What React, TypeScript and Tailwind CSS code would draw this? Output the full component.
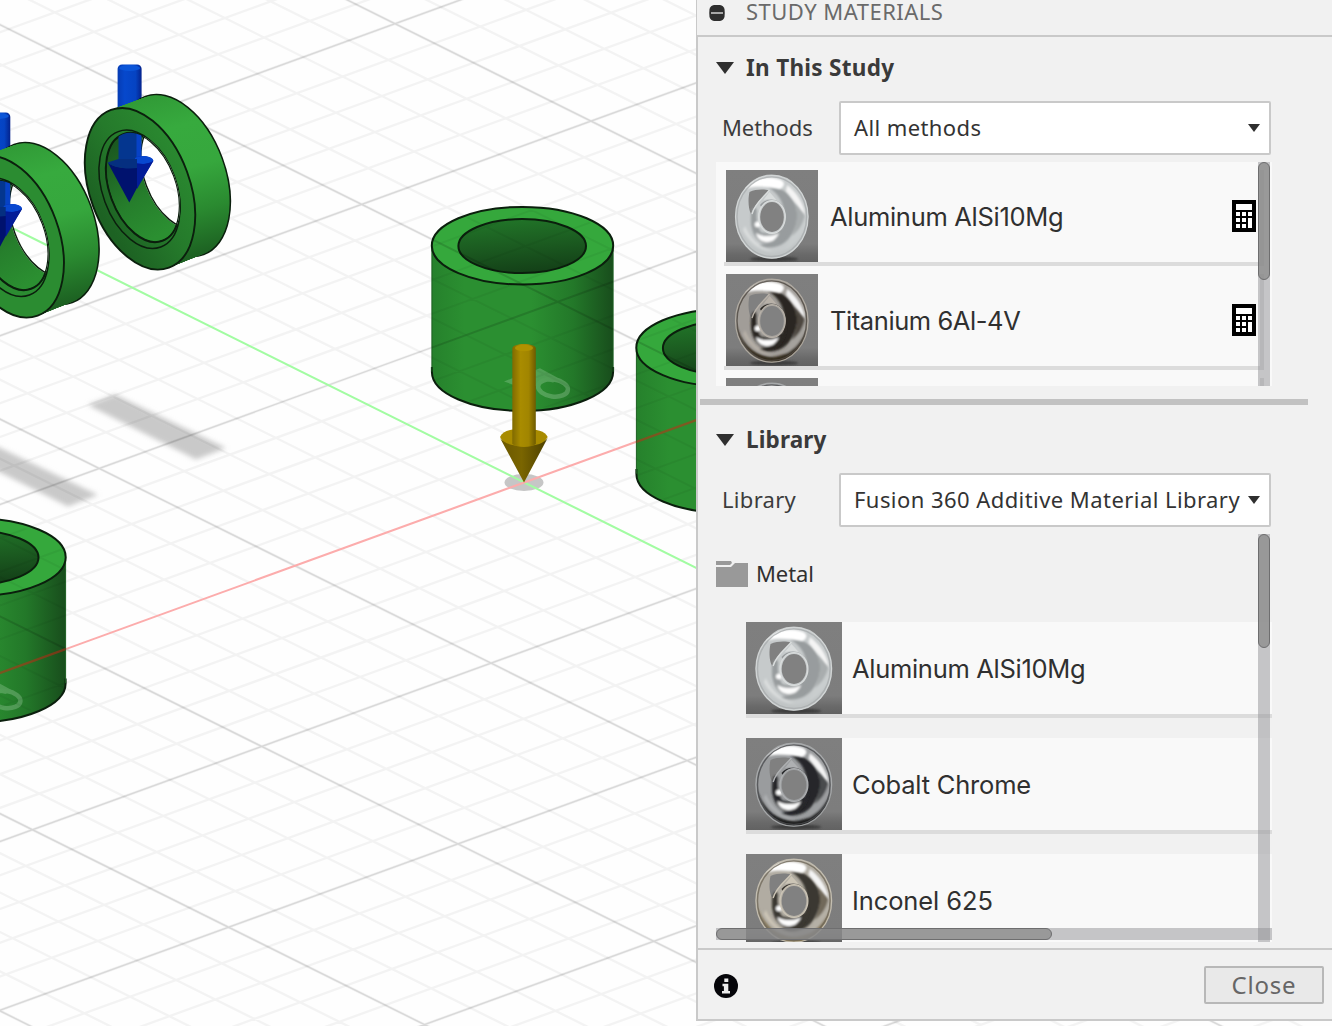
import React from "react";

/* ---------- Canvas geometry ---------- */

const ORIGIN = { x: 524.4, y: 482.5 };
const U = { x: 196, y: 97.4 };
const V = { x: -229.3, y: 83.3 };
const DIVISIONS = 5;

function gridPaths() {
  let minor = "";
  let major = "";
  const reach = 10;
  for (let i = -6 * DIVISIONS; i <= 6 * DIVISIONS; i++) {
    if (i === 0) continue;
    const k = i / DIVISIONS;
    const along = `M${(ORIGIN.x + k * V.x - reach * U.x).toFixed(1)} ${(ORIGIN.y + k * V.y - reach * U.y).toFixed(1)}L${(ORIGIN.x + k * V.x + reach * U.x).toFixed(1)} ${(ORIGIN.y + k * V.y + reach * U.y).toFixed(1)}`;
    const across = `M${(ORIGIN.x + k * U.x - reach * V.x).toFixed(1)} ${(ORIGIN.y + k * U.y - reach * V.y).toFixed(1)}L${(ORIGIN.x + k * U.x + reach * V.x).toFixed(1)} ${(ORIGIN.y + k * U.y + reach * V.y).toFixed(1)}`;
    if (i % DIVISIONS === 0) major += along + across;
    else minor += along + across;
  }
  return { minor, major };
}

const GRID = gridPaths();

/* Path of an ellipse whose major axis is tilted, in plain user coordinates. */
function tilted(cx: number, cy: number, rx: number, ry: number) {
  const a = (69.8 * Math.PI) / 180;
  const px = rx * Math.cos(a);
  const py = rx * Math.sin(a);
  return `M${cx - px} ${cy - py}A${rx} ${ry} 69.8 1 1 ${cx + px} ${cy + py}A${rx} ${ry} 69.8 1 1 ${cx - px} ${cy - py}Z`;
}

const FRONT = tilted(140, 188.8, 84, 50);
const BACK = tilted(174.5, 175.5, 83.5, 50);
const BORE = tilted(142.8, 187.5, 57, 33.5);
const THROUGH = tilted(177.5, 174, 57, 34);
const RING_STEPS = Array.from({ length: 30 }, (_, i) => i / 29);

function Ring({ id, dx, dy, face }: { id: string; dx: number; dy: number; face: string }) {
  return (
    <g transform={`translate(${dx} ${dy})`}>
      <clipPath id={`${id}-hole`}>
        <path d={BORE} />
      </clipPath>
      <clipPath id={`${id}-through`}>
        <path d={THROUGH} />
      </clipPath>
      <rect x="117.6" y="64.5" width="24" height="60" rx="4.5" fill="url(#blueShaft)" />
      <ellipse cx="129.6" cy="68" rx="10.5" ry="3" fill="#0b55d8" />
      <path d={BACK} fill="none" stroke="#0b1f0d" strokeWidth="3" />
      {RING_STEPS.map((t) => (
        <path key={t} d={tilted(174.5 - 34.5 * t, 175.5 + 13.3 * t, 83.5 + 0.5 * t, 50)} fill="url(#ringSide)" />
      ))}
      <path d={FRONT} fill={face} stroke="#0b1f0d" strokeWidth="1.9" />
      <path d={tilted(139.5, 189.3, 61.5, 36.8)} fill="none" stroke="#0b1f0d" strokeWidth="1.5" />
      <path d={BORE} fill="url(#ringInner)" stroke="#0b1f0d" strokeWidth="1.6" />
      <g clipPath={`url(#${id}-hole)`}>
        <g clipPath={`url(#${id}-through)`}>
          <rect x="80" y="80" width="160" height="200" fill="#fff" />
          <use href="#grid" transform={`translate(${-dx} ${-dy})`} />
          <path d={THROUGH} fill="none" stroke="#0b1f0d" strokeWidth="3" />
        </g>
        <path d={BORE} fill="none" stroke="#0b1f0d" strokeWidth="2.4" />
        <rect x="118.5" y="120" width="18.5" height="44" fill="#04368f" />
        <rect x="136.5" y="120" width="5" height="44" fill="#0742c6" />
      </g>
      <path d="M137 157 C143 155 153 157 153.3 161 L141 181 L129.3 190 Z" fill="#00159a" />
      <path d="M135 158 C140 154.5 153 155.5 153.3 161 C148 165 140 164 135 163 Z" fill="#0847cf" />
      <path d="M107.7 162.500 C112 167 124 168.500 129 167.500 L137 168 C139 172 139 178 138 186 L129.3 202.500 Z" fill="#00126e" />
      <path d="M137 164 C144 165 150 163 153.3 161 L137 189 Z" fill="#021c98" />
      <path d="M107.7 162.5 L118.5 159 L137 159 L137 168 C126 169.500 112 167.5 107.7 162.5 Z" fill="#052f80" />
    </g>
  );
}

function Tube({ dx, dy }: { dx: number; dy: number }) {
  return (
    <g transform={`translate(${dx} ${dy})`}>
      <path d="M431.9 245.7 V371.9 A90.6 39 0 0 0 613.1 371.9 V245.7 Z" fill="url(#tubeSide)" />
      <path d="M431.9 367 V371.9 A90.6 39 0 0 0 613.1 371.9 V367" fill="none" stroke="#0b1f0d" strokeWidth="2" />
      <path d="M431.9 245.7 V371.7 M613.1 245.7 V371.7" stroke="#1c5f22" strokeWidth="1" />
      <ellipse cx="522.5" cy="245.7" rx="90.7" ry="38.8" fill="#35a83c" stroke="#0b1f0d" strokeWidth="2" />
      <ellipse cx="522.2" cy="246.1" rx="63.8" ry="27" fill="url(#tubeHole)" stroke="#0b1f0d" strokeWidth="2" />
      <g opacity="0.22">
        <path d="M504 381.5 L514 377.5 L540 368.3 L560 379 L553 382.5 L543 380 L536 386 L520 387 Z" fill="#d8f0da" />
        <ellipse cx="553" cy="388" rx="15" ry="8.5" transform="rotate(8 553 388)" fill="none" stroke="#e8fbe9" strokeWidth="4.5" />
      </g>
    </g>
  );
}

function Scene() {
  return (
    <svg className="absolute inset-0" width="1332" height="1026" viewBox="0 0 1332 1026">
      <defs>
        <g id="grid" fill="none">
          <path d={GRID.minor} stroke="#000" strokeOpacity="0.042" strokeWidth="2.4" />
          <path d={GRID.major} stroke="#000" strokeOpacity="0.05" strokeWidth="2.8" />
          <path d={GRID.major} stroke="#000" strokeOpacity="0.1" strokeWidth="1.4" />
          <path d={`M${ORIGIN.x - 10 * U.x} ${ORIGIN.y - 10 * U.y}L${ORIGIN.x + 10 * U.x} ${ORIGIN.y + 10 * U.y}`} stroke="#a2fca2" strokeWidth="2.1" />
          <path d={`M${ORIGIN.x - 10 * V.x} ${ORIGIN.y - 10 * V.y}L${ORIGIN.x + 10 * V.x} ${ORIGIN.y + 10 * V.y}`} stroke="#fcacac" strokeWidth="2.1" />
        </g>
        <linearGradient id="tubeSide" x1="0" x2="1" y1="0" y2="0">
          <stop offset="0" stopColor="#26812c" />
          <stop offset="0.18" stopColor="#2b8f31" />
          <stop offset="0.55" stopColor="#2b8f31" />
          <stop offset="0.78" stopColor="#237829" />
          <stop offset="1" stopColor="#184d1c" />
        </linearGradient>
        <linearGradient id="tubeHole" x1="0.4" x2="0.6" y1="0" y2="1">
          <stop offset="0" stopColor="#217428" />
          <stop offset="0.5" stopColor="#1b5a20" />
          <stop offset="1" stopColor="#133f17" />
        </linearGradient>
        <linearGradient id="ringSide" gradientUnits="userSpaceOnUse" x1="160" y1="95" x2="205" y2="262">
          <stop offset="0" stopColor="#319b37" />
          <stop offset="0.2" stopColor="#37aa3e" />
          <stop offset="0.45" stopColor="#36a73d" />
          <stop offset="0.7" stopColor="#2a8a30" />
          <stop offset="1" stopColor="#1a591f" />
        </linearGradient>
        <linearGradient id="ringFace" gradientUnits="userSpaceOnUse" x1="95" y1="205" x2="180" y2="150">
          <stop offset="0" stopColor="#1d6223" />
          <stop offset="0.5" stopColor="#257a2b" />
          <stop offset="1" stopColor="#2a8930" />
        </linearGradient>
        <linearGradient id="ringInner" gradientUnits="userSpaceOnUse" x1="105" y1="150" x2="160" y2="235">
          <stop offset="0" stopColor="#1b5820" />
          <stop offset="0.6" stopColor="#267f2c" />
          <stop offset="1" stopColor="#2b8f31" />
        </linearGradient>
        <linearGradient id="blueShaft" x1="0" x2="1" y1="0" y2="0">
          <stop offset="0" stopColor="#063cb4" />
          <stop offset="0.3" stopColor="#0648cc" />
          <stop offset="0.75" stopColor="#0543c2" />
          <stop offset="1" stopColor="#04228c" />
        </linearGradient>
        <linearGradient id="goldShaft" x1="0" x2="1" y1="0" y2="0">
          <stop offset="0" stopColor="#806a00" />
          <stop offset="0.35" stopColor="#a98c00" />
          <stop offset="0.7" stopColor="#a18500" />
          <stop offset="1" stopColor="#6d5a00" />
        </linearGradient>
        <linearGradient id="goldCone" x1="0" x2="1" y1="0" y2="0">
          <stop offset="0" stopColor="#6a5700" />
          <stop offset="0.45" stopColor="#7a6500" />
          <stop offset="1" stopColor="#4c3f00" />
        </linearGradient>
        <filter id="soft" x="-20%" y="-20%" width="140%" height="140%">
          <feGaussianBlur stdDeviation="2.4" />
        </filter>
      </defs>

      <rect width="1332" height="1026" fill="#fefefe" />
      <g fill="#c9c9c9" filter="url(#soft)">
        <path d="M88 405 L115 394.5 L226 448 L196 459.5 Z" />
        <path d="M-40 452 L-13 441.5 L98 495 L68 506.5 Z" />
      </g>
      <ellipse cx="524" cy="482.5" rx="19.5" ry="8.5" fill="#c6c6c6" />
      <use href="#grid" />

      <Tube dx={0} dy={0} />
      <Tube dx={204.5} dy={102} />
      <Tube dx={-547.5} dy={311.5} />
      <g opacity="0.45">
        <clipPath id="tubes">
          <path d="M432 246 A90.7 39 0 0 1 613 246 V372 A90.7 39 0 0 1 432 372 Z" />
          <path d="M636.5 348 A90.7 39 0 0 1 817.5 348 V474 A90.7 39 0 0 1 636.5 474 Z" />
          <path d="M-115 557 A90.7 39 0 0 1 65.5 557 V683 A90.7 39 0 0 1 -115 683 Z" />
        </clipPath>
        <g clipPath="url(#tubes)" fill="none">
          <path d={GRID.minor} stroke="#000" strokeOpacity="0.1" strokeWidth="2" />
          <path d={GRID.major} stroke="#000" strokeOpacity="0.3" strokeWidth="2" />
          <path d={`M${ORIGIN.x - 10 * V.x} ${ORIGIN.y - 10 * V.y}L${ORIGIN.x + 10 * V.x} ${ORIGIN.y + 10 * V.y}`} stroke="#e01b10" strokeWidth="2.4" />
        </g>
      </g>

      <Ring id="ringB" dx={0} dy={0} face="url(#ringFace)" />
      <Ring id="ringA" dx={-131.3} dy={48} face="#2b8c31" />

      <path d="M500 437 C503 430 511 429 524 429 C537 429 545 431 547.7 437 L540 448 H507 Z" fill="#a88b00" />
      <path d="M500 438 C504 443 511 446 524 446 C537 446 544 443 547.7 438 L524 482.5 Z" fill="url(#goldCone)" />
      <path d="M512.3 348.500 C512.3 342.5 535.8 342.5 535.8 348.500 V444 C531 448 517 448 512.3 444 Z" fill="url(#goldShaft)" />
      <ellipse cx="524" cy="348" rx="9" ry="3.2" fill="#b09200" />
    </svg>
  );
}

/* ---------- Material thumbnails ---------- */

type Tone = { rim: string; body: string; dark: string; mid: string; foot: string; edge: string };

const ALUMINUM: Tone = { rim: "#a9adae", body: "#c6cacb", dark: "#989c9e", mid: "#c9cdce", foot: "#c0c4c5", edge: "#dadddd" };
const TITANIUM: Tone = { rim: "#4d4740", body: "#a19d98", dark: "#2b2824", mid: "#a5a29d", foot: "#33291c", edge: "#b8b1a8" };
const COBALT: Tone = { rim: "#4a4b4d", body: "#9a9c9e", dark: "#27282a", mid: "#9c9ea0", foot: "#1c1d1f", edge: "#aeb0b2" };
const INCONEL: Tone = { rim: "#71695a", body: "#b1aca2", dark: "#3b3731", mid: "#b5b0a6", foot: "#7e6f50", edge: "#ccc5b6" };

function Thumb({ id, tone, className }: { id: string; tone: Tone; className: string }) {
  return (
    <svg className={className} viewBox="0 0 92 92" preserveAspectRatio="none">
      <defs>
        <linearGradient id={`${id}-bg`} x1="0" x2="0" y1="0" y2="1">
          <stop offset="0" stopColor="#7f7f7f" />
          <stop offset="0.8" stopColor="#7d7d7d" />
          <stop offset="0.92" stopColor="#696969" />
          <stop offset="1" stopColor="#626262" />
        </linearGradient>
        <filter id={`${id}-b`} x="-30%" y="-30%" width="160%" height="160%">
          <feGaussianBlur stdDeviation="0.8" />
        </filter>
        <clipPath id={`${id}-c`}>
          <ellipse cx="45.8" cy="46.7" rx="36.5" ry="41.7" />
        </clipPath>
      </defs>
      <rect width="92" height="92" fill={`url(#${id}-bg)`} />
      <ellipse cx="48" cy="89" rx="24" ry="2.5" fill="#3e3e3e" filter={`url(#${id}-b)`} />
      <ellipse cx="45.8" cy="46.7" rx="36.5" ry="41.7" fill={tone.body} />
      <g clipPath={`url(#${id}-c)`}>
        <g filter={`url(#${id}-b)`}>
          {/* right sweep, lower band and foot */}
          <path d="M56 16 C72 24 82 40 80 58 C76 72 66 82 54 86 C70 70 74 40 56 16 Z" fill={tone.mid} />
          <path d="M10 50 C14 76 34 92 54 88 C70 84 80 68 83 50 C76 70 64 82 46 83 C28 82 16 70 10 50 Z" fill={tone.foot} />
          <path d="M42 17 C69 17 78 44 66 64 C59 76 46 81 32 75 C50 74 60 58 58 42 C57 31 52 23 42 17 Z" fill={tone.dark} />
          <path d="M69 32 C72 42 72 54 66 66 C74 60 79 50 79 42 Z" fill={tone.rim} />
          <path d="M17 60 C24 74 36 81 46 81 C34 78 24 68 19 56 Z" fill={tone.edge} />
        </g>
        {/* opening behind the inner ring */}
        <path d="M23.500 22 C30 19 38 19 43 20.500 C38 27 29 33 25 44 C22 38 22 28 23.500 22 Z" fill="#808080" />
        <g filter={`url(#${id}-b)`}>
          <path d="M18 19 C26 7 44 5 55 10 C60 13 58 17 54 19 C44 17 30 15 18 19 Z" fill="#fff" />
          <path d="M61 15 C70 21 78 34 80 46 C74 39 66 28 60 21 Z" fill="#f4f4f4" />
        </g>
      </g>
      <ellipse cx="45.8" cy="46.7" rx="36.3" ry="41.5" fill="none" stroke={tone.edge} strokeWidth="1.2" opacity="0.8" />
      <ellipse cx="45.8" cy="46.7" rx="34.8" ry="39.8" fill="none" stroke={tone.rim} strokeWidth="1.4" opacity="0.8" />
      {/* inner ring */}
      <g filter={`url(#${id}-b)`}>
        <path d="M27 38 C23 50 25 66 36 73 C48 79 58 70 60 56 L57 38 Z" fill={tone.dark} />
        <path d="M31 37 C27 47 29 56 34 62 L46 64 L56 58 L57 38 Z" fill={tone.mid} />
        <path d="M26 40 C23 52 26 66 34 71 L35 62 C31 56 30 48 31 40 Z" fill={tone.dark} />
        <path d="M30 63 C37 67 46 67 53 63 C50 70 45 73 39 72 C34 71 31 68 30 63 Z" fill="#fcfcfc" />
        <circle cx="31.5" cy="54.5" r="2.800" fill="#fff" />
      </g>
      <path d="M26 44 C29 33 38 27 43.500 20" fill="none" stroke={tone.edge} strokeWidth="1.300" />
      <path d="M37 30.500 L43.500 22 L51 30.500 C47 28.500 41 28.500 37 30.500 Z" fill={tone.edge} />
      <path d="M34 35 C39 28 51 28 56 35 L54 37 C49 32 42 32 36 38 Z" fill={tone.dark} />
      <ellipse cx="46" cy="47" rx="13.300" ry="16.300" fill={tone.mid} stroke={tone.edge} strokeWidth="1.200" />
      <ellipse cx="46" cy="47" rx="11.800" ry="15" fill="#818181" />
    </svg>
  );
}

/* ---------- Panel pieces ---------- */

function CalculatorIcon() {
  return (
    <svg className="-mr-1 shrink-0" width="32" height="32" viewBox="0 0 32 32" shapeRendering="crispEdges">
      <rect width="24" height="32" fill="#000" />
      <path d="M4 4h16v6H4zM4 12h4v4H4zM10 12h4v4h-4zM16 12h4v4h-4zM4 18h4v4H4zM10 18h4v4h-4zM4 24h4v4H4zM10 24h4v4h-4zM16 18h4v10h-4z" fill="#fff" />
    </svg>
  );
}

function SectionTitle({ label, className }: { label: string; className: string }) {
  return (
    <div className="flex h-8 items-center pl-[18px]">
      <svg width="18" height="12" viewBox="0 0 18 12">
        <path d="M0 0H18L9 12Z" fill="#2f2f2f" />
      </svg>
      <span className={"ml-3 text-[22.5px] font-bold whitespace-nowrap text-[#3a3a3a] " + className}>{label}</span>
    </div>
  );
}

function SelectRow({ label, value, labelClass, valueClass }: { label: string; value: string; labelClass: string; valueClass: string }) {
  return (
    <div className="flex h-[54px] items-center pl-6">
      <span className={"w-[117px] pb-0.5 text-[22px] whitespace-nowrap text-[#3c3c3c] " + labelClass}>{label}</span>
      <div className="flex h-full w-[432px] items-center justify-between rounded-[2px] border-2 border-[#c9c9c9] bg-white pr-[9px] pl-[13px]">
        <span className={"pb-0.5 text-[22px] whitespace-nowrap text-[#333] " + valueClass}>{value}</span>
        <svg className="shrink-0" width="12" height="8" viewBox="0 0 12 8">
          <path d="M0 0H12L6 8Z" fill="#2f2f2f" />
        </svg>
      </div>
    </div>
  );
}

function StudyRow({ id, name, tone, nameClass }: { id: string; name: string; tone: Tone; nameClass: string }) {
  return (
    <div className="mb-2 flex h-24 w-[540px] shrink-0 items-center border-r-4 border-b-4 border-[#dcdcdc] pl-0.5">
      <Thumb id={id} tone={tone} className="size-[92px] shrink-0" />
      <span className={"ml-3 flex-1 pt-0.5 text-[25.5px] whitespace-nowrap text-[#303030] " + nameClass}>{name}</span>
      <CalculatorIcon />
    </div>
  );
}

function LibraryRow({ id, name, tone, nameClass }: { id: string; name: string; tone: Tone; nameClass: string }) {
  return (
    <div className="mb-5 ml-[30px] flex h-24 shrink-0 items-center border-b-4 border-[#dcdcdc] bg-[#f9f9f9]">
      <Thumb id={id} tone={tone} className="h-[92px] w-24 shrink-0" />
      <span className={"ml-2.5 pt-0.5 text-[25.5px] whitespace-nowrap text-[#303030] " + nameClass}>{name}</span>
    </div>
  );
}

export default function App() {
  return (
    <div className="relative flex h-[1026px] w-[1332px] justify-end overflow-hidden bg-white font-['Noto_Sans','Open_Sans',sans-serif]">
      <Scene />
      <aside className="relative flex h-[1021px] w-[636px] flex-col border-b-2 border-[#c9c9c9] bg-[#f1f1f1]">
        <header className="flex h-[37px] shrink-0 items-start border-b-2 border-l border-[#c9c9c9] pl-3">
          <svg className="mt-[5px]" width="16" height="16" viewBox="0 0 16 16">
            <path d="M5 0H11Q14.500 0.500 15.500 4Q16 8 15.500 12Q14.500 15.500 11 16H5Q1.500 15.500 0.500 12Q0 8 0.500 4Q1.500 0.500 5 0Z" fill="#2e2e2e" />
            <rect x="2" y="7" width="12" height="2" fill="#a8a8a8" />
          </svg>
          <span className="-mt-px ml-[21px] text-[22px] leading-[24px] tracking-[0.48px] whitespace-nowrap text-[#6a6a6a]">STUDY MATERIALS</span>
        </header>

        <section className="flex h-[911px] shrink-0 flex-col border-l-2 border-[#c9c9c9] pt-[15px]">
          <SectionTitle label="In This Study" className="tracking-[0.3px]" />
          <div className="h-[17px]" />
          <SelectRow label="Methods" value="All methods" labelClass="tracking-[-0.1px]" valueClass="tracking-[0.4px]" />

          <div className="relative mt-[7px] ml-[18px] flex h-56 w-[556px] shrink-0 flex-col overflow-hidden bg-[#f9f9f9] pt-2 pl-2 font-[Inter,sans-serif]">
            <StudyRow id="s1" name="Aluminum AlSi10Mg" tone={ALUMINUM} nameClass="tracking-[-0.3px]" />
            <StudyRow id="s2" name="Titanium 6Al-4V" tone={TITANIUM} nameClass="tracking-[-0.42px]" />
            <StudyRow id="s3" name="" tone={COBALT} nameClass="" />
            <div className="absolute top-0 right-[2px] h-full w-3 bg-[rgba(145,146,150,0.5)]">
              <div className="h-[118px] rounded-full border border-[#6e6e6f] bg-[#868686]/70" />
            </div>
          </div>

          <div className="mt-[13px] ml-[2px] h-[6px] w-[608px] shrink-0 bg-[#c2c2c2]" />

          <div className="h-[19px] shrink-0" />
          <SectionTitle label="Library" className="tracking-[0.15px]" />
          <div className="h-[17px]" />
          <SelectRow label="Library" value="Fusion 360 Additive Material Library" labelClass="tracking-[0.3px]" valueClass="tracking-[0.44px]" />

          <div className="relative mt-[7px] ml-[18px] flex h-[408px] w-[556px] shrink-0 flex-col overflow-hidden">
            <div className="flex h-[88px] shrink-0 items-center pb-2">
              <svg width="32" height="26" viewBox="0 0 32 26">
                <path d="M0 0H15L16 2L14 4H0ZM0 6H15L19 2H32V26H0Z" fill="#999" />
              </svg>
              <span className="ml-2 pb-0.5 text-[22px] tracking-[-0.1px] text-[#303030]">Metal</span>
            </div>
            <div className="flex flex-col font-[Inter,sans-serif]">
              <LibraryRow id="l1" name="Aluminum AlSi10Mg" tone={ALUMINUM} nameClass="tracking-[-0.3px]" />
              <LibraryRow id="l2" name="Cobalt Chrome" tone={COBALT} nameClass="tracking-[-0.2px]" />
              <LibraryRow id="l3" name="Inconel 625" tone={INCONEL} nameClass="tracking-[-0.1px]" />
            </div>
            <div className="absolute top-0 right-[2px] h-full w-3 bg-[rgba(145,146,150,0.5)]">
              <div className="h-[114px] rounded-full border border-[#6e6e6f] bg-[#868686]/70" />
            </div>
            <div className="absolute bottom-[2px] left-0 h-3 w-full bg-[rgba(145,146,150,0.5)]">
              <div className="h-3 w-[336px] rounded-full border border-[#6e6e6f] bg-[#868686]/70" />
            </div>
          </div>
        </section>

        <footer className="flex flex-1 items-center justify-between border-t-2 border-l-2 border-[#c9c9c9] pr-2 pl-4">
          <svg className="mt-0.5" width="24" height="24" viewBox="0 0 24 24">
            <circle cx="12" cy="12" r="12" fill="#06060a" />
            <path d="M10.300 4.500h4v3.500h-4zM8.500 9.800h5.800v7.200h1.700v2.500h-8v-2.500h1.900v-4.700h-1.400z" fill="#ededed" />
          </svg>
          <button className="mt-[1px] flex h-[38px] w-[120px] items-center justify-center rounded-[2px] border-2 border-[#b8b8b8] bg-[#e9e9e9] text-[24px] tracking-[0.8px] text-[#666]">
            Close
          </button>
        </footer>
      </aside>
    </div>
  );
}
